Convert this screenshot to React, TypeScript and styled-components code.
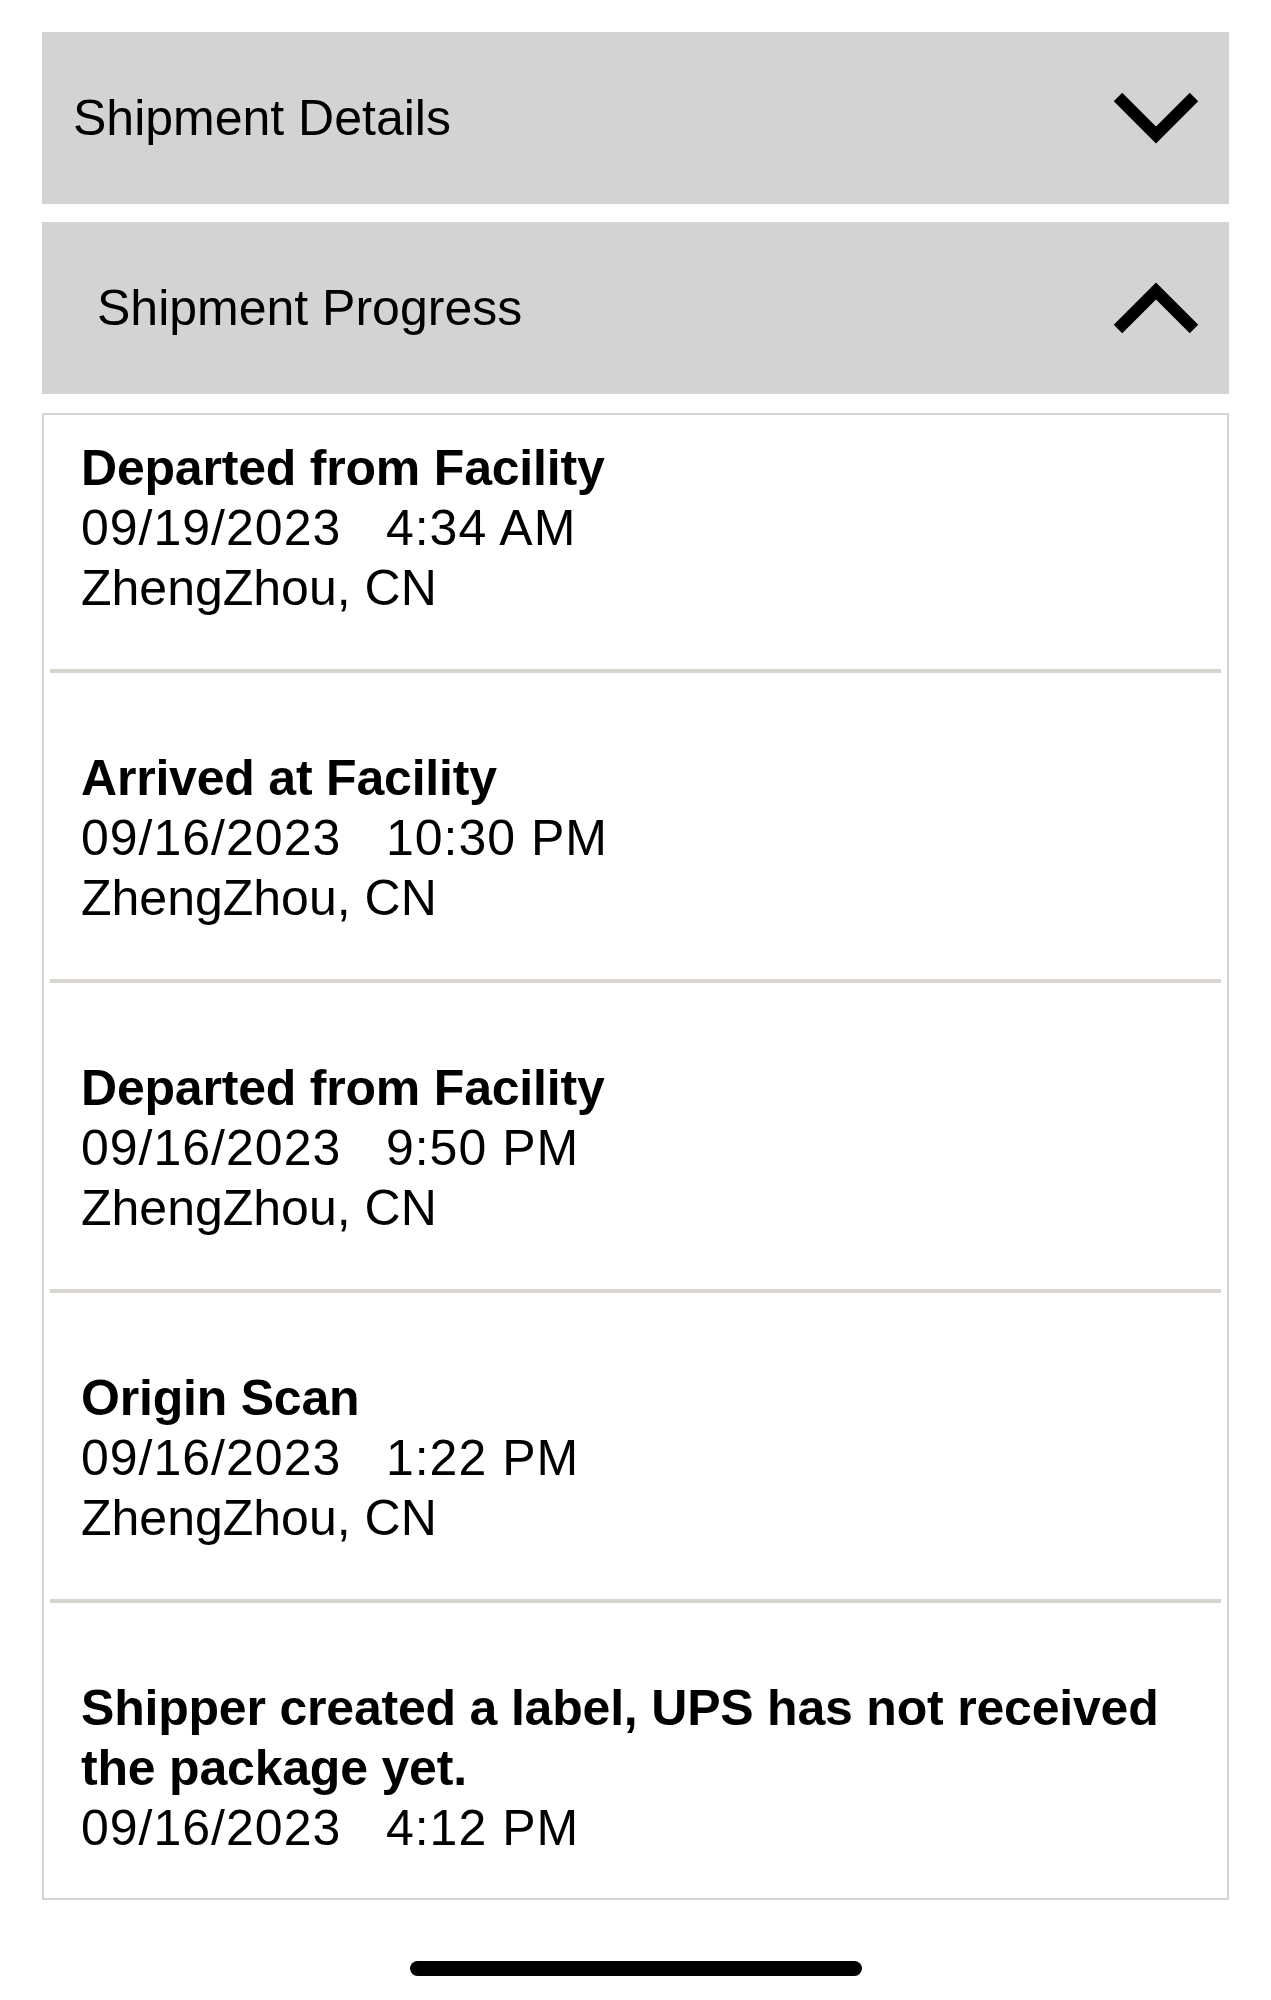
import React from "react";
import styled, { createGlobalStyle } from "styled-components";

const GlobalStyle = createGlobalStyle`
  body {
    margin: 0;
    background: #ffffff;
    font-family: "Liberation Sans", Arial, Helvetica, sans-serif;
    color: #000000;
  }
`;

const Page = styled.main`
  display: flex;
  flex-direction: column;
  padding: 32px 42px 0;
  min-height: 2000px;
  box-sizing: border-box;
`;

const Sections = styled.div`
  display: flex;
  flex-direction: column;
  gap: 18px;
`;

const AccordionHeader = styled.div<{ $inset: number }>`
  display: flex;
  align-items: center;
  justify-content: space-between;
  height: 172px;
  padding: 0 29px 0 ${(p) => p.$inset}px;
  background: #d3d3d3;
  cursor: pointer;
`;

const HeaderTitle = styled.span`
  font-size: 50px;
  line-height: 60px;
  font-weight: 400;
`;

const Chevron = styled.svg`
  display: block;
  width: 88px;
  height: 56px;
`;

const ProgressList = styled.ul`
  list-style: none;
  margin: 1px 0 0;
  padding: 0 6px;
  border: 2px solid #d5d5d5;
`;

const Event = styled.li<{ $first?: boolean; $last?: boolean }>`
  padding: ${(p) => (p.$first ? 23 : 75)}px 27px ${(p) => (p.$last ? 40 : 51)}px 31px;
  border-bottom: ${(p) => (p.$last ? "none" : "4px solid #d8d5d1")};
`;

const EventTitle = styled.div`
  font-size: 50px;
  line-height: 60px;
  font-weight: 700;
  letter-spacing: -0.2px;
`;

const EventLine = styled.div<{ $numeric?: boolean }>`
  font-size: 50px;
  line-height: 60px;
  white-space: pre;
  letter-spacing: ${(p) => (p.$numeric ? "1px" : "0")};
`;

const HomeIndicator = styled.div`
  align-self: center;
  width: 452px;
  height: 15px;
  margin-top: 61px;
  border-radius: 8px;
  background: #000000;
`;

type Direction = "up" | "down";

const ChevronIcon = ({ dir }: { dir: Direction }) => (
  <Chevron viewBox="0 0 88 56">
    <polyline
      points={dir === "down" ? "6,7 44,45 82,7" : "6,49 44,11 82,49"}
      fill="none"
      stroke="#000"
      strokeWidth={12}
      strokeLinejoin="miter"
    />
  </Chevron>
);

type ProgressEvent = {
  status: string;
  date: string;
  time: string;
  location?: string;
};

const events: ProgressEvent[] = [
  { status: "Departed from Facility", date: "09/19/2023", time: "4:34 AM", location: "ZhengZhou, CN" },
  { status: "Arrived at Facility", date: "09/16/2023", time: "10:30 PM", location: "ZhengZhou, CN" },
  { status: "Departed from Facility", date: "09/16/2023", time: "9:50 PM", location: "ZhengZhou, CN" },
  { status: "Origin Scan", date: "09/16/2023", time: "1:22 PM", location: "ZhengZhou, CN" },
  { status: "Shipper created a label, UPS has not received the package yet.", date: "09/16/2023", time: "4:12 PM" },
];

const App: React.FC = () => {
  return (
    <>
      <GlobalStyle />
      <Page>
        <Sections>
          <AccordionHeader $inset={31}>
            <HeaderTitle>Shipment Details</HeaderTitle>
            <ChevronIcon dir="down" />
          </AccordionHeader>
          <AccordionHeader $inset={55}>
            <HeaderTitle>Shipment Progress</HeaderTitle>
            <ChevronIcon dir="up" />
          </AccordionHeader>
          <ProgressList>
            {events.map((ev, i) => (
              <Event key={i} $first={i === 0} $last={i === events.length - 1}>
                <EventTitle>{ev.status}</EventTitle>
                <EventLine $numeric>{`${ev.date}   ${ev.time}`}</EventLine>
                {ev.location && <EventLine>{ev.location}</EventLine>}
              </Event>
            ))}
          </ProgressList>
        </Sections>
        <HomeIndicator />
      </Page>
    </>
  );
};

export default App;
